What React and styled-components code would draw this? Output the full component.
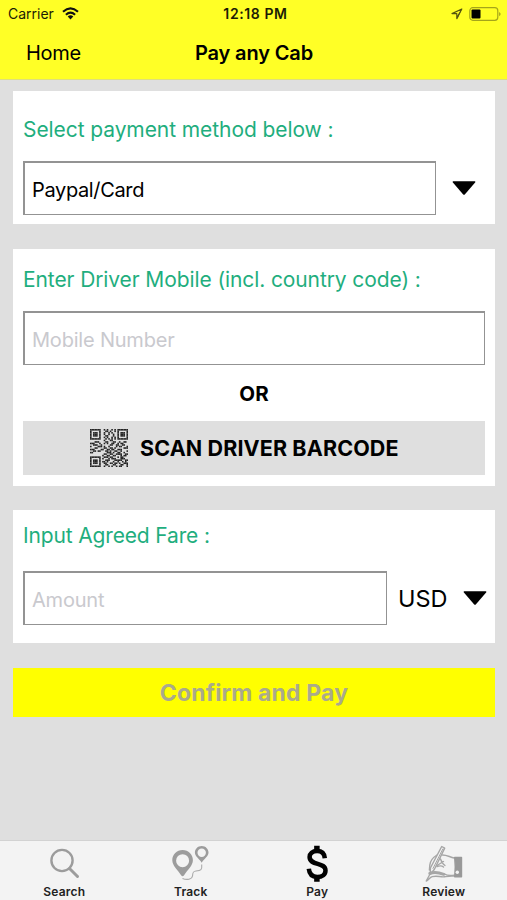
import React from 'react';
import styled, { createGlobalStyle } from 'styled-components';

const GlobalStyle = createGlobalStyle`
  * { box-sizing: border-box; }
  body {
    margin: 0;
    background: #dfdfdf;
    font-family: Inter, 'Liberation Sans', sans-serif;
    color: #000;
  }
  button, input { font: inherit; color: inherit; }
`;

const Screen = styled.div`
  width: 507px;
  height: 900px;
  display: flex;
  flex-direction: column;
  background: #dfdfdf;
  overflow: hidden;
`;

const Header = styled.header`
  height: 80px;
  background: #ffff26;
  border-bottom: 1px solid #dede7c;
`;

const StatusBar = styled.div`
  height: 27px;
  padding: 0 6px 0 8px;
  display: grid;
  grid-template-columns: 1fr auto 1fr;
  align-items: center;
  font-size: 14px;
  line-height: 27px;
  color: #1c1c05;
`;

const Carrier = styled.div`
  display: flex;
  align-items: center;
  gap: 8px;
`;

const Clock = styled.div`
  padding-left: 2px;
  font-weight: 600;
  letter-spacing: 0.6px;
`;

const StatusRight = styled.div`
  display: flex;
  justify-content: flex-end;
  align-items: center;
  gap: 6px;
`;

const NavBar = styled.div`
  height: 51px;
  padding: 0 25px 0 26px;
  display: grid;
  grid-template-columns: 1fr auto 1fr;
  align-items: center;
  font-size: 20px;
`;

const BackButton = styled.button`
  justify-self: start;
  padding: 0;
  border: 0;
  background: none;
  letter-spacing: -0.3px;
`;

const Title = styled.h1`
  margin: 0;
  font-size: 20px;
  font-weight: 600;
  letter-spacing: -0.15px;
`;

const Content = styled.main`
  flex: 1;
  padding: 11px 12px 0 13px;
`;

const Card = styled.section`
  height: ${({ $height }) => $height}px;
  margin-bottom: ${({ $gap }) => $gap}px;
  padding: ${({ $top }) => $top}px 10px 0;
  background: #fff;
`;

const Label = styled.h2`
  margin: 0 0 ${({ $gap }) => $gap}px;
  font-size: 21px;
  line-height: 28px;
  font-weight: 400;
  letter-spacing: ${({ $spacing }) => $spacing}px;
  white-space: nowrap;
  color: #1fae7e;
`;

const Row = styled.div`
  display: flex;
  align-items: center;
`;

const Field = styled.input`
  display: block;
  flex: none;
  width: ${({ $width }) => $width}px;
  height: 54px;
  padding: 3px 7px 0;
  border: solid #939393;
  border-width: 2px 1px 1px 2px;
  border-radius: 0;
  background: #fff;
  outline: 0;
  font-size: 20px;
  letter-spacing: ${({ $spacing }) => $spacing}px;
  &::placeholder { color: #c9c9ce; opacity: 1; }
`;

const Or = styled.div`
  height: 56px;
  line-height: 57px;
  text-align: center;
  font-size: 20.5px;
  font-weight: 700;
`;

const ScanButton = styled.button`
  width: 100%;
  height: 54px;
  padding: 0 0 0 67px;
  display: flex;
  align-items: center;
  gap: 12px;
  border: 0;
  background: #dfdfdf;
  font-size: 21.5px;
  font-weight: 700;
  letter-spacing: 0.12px;
  white-space: nowrap;
`;

const Currency = styled.span`
  flex: none;
  width: 64px;
  margin-left: 11px;
  font-size: 23.5px;
`;

const ConfirmButton = styled.button`
  display: block;
  width: 100%;
  height: 49px;
  padding: 0;
  border: 0;
  background: #ff0;
  color: #aaaa8c;
  font-size: 23px;
  font-weight: 700;
  letter-spacing: 0.15px;
`;

const TabBar = styled.nav`
  height: 60px;
  padding-left: 1px;
  display: grid;
  grid-template-columns: repeat(4, 1fr);
  background: #f3f3f3;
  border-top: 1px solid #d2d2d2;
`;

const Tab = styled.a`
  display: flex;
  flex-direction: column;
  align-items: center;
  padding-top: 4px;
  color: #222;
  font-size: 12px;
  font-weight: 600;
  letter-spacing: 0.2px;
  line-height: 15px;
  svg { display: block; margin-bottom: 1px; }
`;

const Caret = styled.svg`
  flex: none;
  margin-left: ${({ $left }) => $left}px;
`;

const WifiIcon = () => (
  <svg width="17" height="13" viewBox="0 0 17 13">
    <g fill="none" stroke="#111" strokeWidth="2.1">
      <path d="M1 4.8Q8.5-2 16 4.8" />
      <path d="M3.9 7.7Q8.5 3.6 13.1 7.7" />
    </g>
    <path d="M5.7 9.5Q8.5 7.1 11.3 9.5L8.5 12.5z" fill="#111" />
  </svg>
);

const LocationIcon = () => (
  <svg width="12" height="12" viewBox="0 0 12 12">
    <path d="M10.8 1L1 5.600h4.800v5z" fill="none" stroke="#55550f" strokeWidth="1.2" strokeLinejoin="round" />
    <path d="M10.8 1L6.4 7.5v3.2z" fill="#55550f" />
  </svg>
);

const BatteryIcon = () => (
  <svg width="32" height="14" viewBox="0 0 32 14">
    <rect x=".8" y=".7" width="28" height="12.6" rx="3" fill="none" stroke="#a5a51a" strokeWidth="1.2" />
    <rect x="2.5" y="2.4" width="9" height="9.2" rx="1" />
    <path d="M30.3 5v4.2q1.2-.8 1.2-2.1T30.3 5z" fill="#8c8c15" />
  </svg>
);

const DownArrow = ({ left }) => (
  <Caret width="24" height="14" viewBox="0 0 24 14" $left={left}>
    <path d="M1.2.2h21.6q1 .5.3 1.4L13 13.2q-1 1-2 0L.9 1.6Q.2.7 1.2.2z" />
  </Caret>
);

const QR_ROWS = [
  '1111111001010010101111111',
  '1000001000110100101000001',
  '1011101001001010001011101',
  '1011101001001001001011101',
  '1011101000110001001011101',
  '1000001001010010101000001',
  '1111111000101010101111111',
  '0000000001000110000000000',
  '0001110000110001100100110',
  '1110001001010011001011000',
  '0011100100000110011001100',
  '1000011101001000010110001',
  '0001100001100110100000111',
  '1110000110011011001110000',
  '0011011000110100110010001',
  '1100000000011101001100100',
  '0000000001100110011110011',
  '0000000010011001100010110',
  '1111111001110110001011000',
  '1000001010001011100011100',
  '1011101000111000111110011',
  '1011101011010001001001010',
  '1011101001100110110100111',
  '1000001000110001100011001',
  '1111111001001010010110001',
];

const QrIcon = () => (
  <svg width="38" height="38" viewBox="0 0 25 25">
    {QR_ROWS.map((row, y) => row.split('').map((cell, x) => (
      cell === '1' ? <rect key={`${x}-${y}`} x={x} y={y} width="1.05" height="1.05" fill="#242424" /> : null
    )))}
  </svg>
);

const SearchIcon = () => (
  <svg width="38" height="38" viewBox="0 0 38 38" fill="none" stroke="#9c9c9c">
    <circle cx="17" cy="15.5" r="10.6" strokeWidth="2.4" />
    <path d="M24.5 23.5l8 8" strokeWidth="3" strokeLinecap="round" />
  </svg>
);

const TrackIcon = () => (
  <svg width="38" height="38" viewBox="0 0 38 38">
    <path
      fill="#9c9c9c"
      fillRule="evenodd"
      d="M10.6 5C4.7 5 .3 9.5.3 15.2c0 5.500 5.300 9.300 8.800 15.100q1.500 2 3 0c3.500-5.800 8.800-9.600 8.800-15.100C20.900 9.500 16.500 5 10.600 5zm0 4.200a6.500 6.500 0 1 1 0 13 6.500 6.500 0 0 1 0-13z"
    />
    <path
      fill="#9c9c9c"
      fillRule="evenodd"
      d="M29.700 1c-3.900 0-6.800 2.900-6.800 6.600 0 3.800 3.800 5.500 6.800 10.200 3-4.700 6.800-6.400 6.800-10.200C36.500 3.900 33.600 1 29.700 1zm0 2.600a4.200 4.200 0 1 1 0 8.400 4.200 4.200 0 0 1 0-8.400z"
    />
    <path d="M10.500 33.500c4.500 1.800 9.500.8 10-2.500.4-2.800 0-4.600 3.500-5 5-.6 6.200-1 5.700-6.500" fill="none" stroke="#aaa" strokeWidth="1.100" />
  </svg>
);

const DollarIcon = () => (
  <svg width="38" height="38" viewBox="0 0 38 38" fill="none" stroke="#000">
    <path d="M18.900.8v5.500M18.900 31.500v5.300" strokeWidth="5.500" />
    <path d="M26.800 13.200c-.4-4.900-3.300-7.100-7.700-7.100-4.700 0-7.500 2.400-7.500 6 0 9 15.900 4.700 15.900 13.300 0 4.100-3.200 6.500-8.200 6.500-5.300 0-8-2.700-8.500-8.100" strokeWidth="4.500" />
  </svg>
);

const ReviewIcon = () => (
  <svg width="38" height="38" viewBox="0 0 38 38" fill="none" stroke="#a6a6a6" strokeWidth="1.400" strokeLinejoin="round" strokeLinecap="round">
    <path d="M12 10c-4 2.500-6.800 6-7.200 10l-.4 5" />
    <path d="M16.700 1.500l3 1.600L9.300 24.500l-4 4.500L5.400 23z" fill="#f3f3f3" />
    <path d="M17.800 4L8 23.500" strokeWidth="1" />
    <path d="M17.500 10c4.500 0 7 2 11.700 3M15.500 14c1.300 3.500 2.500 5.300 4.500 6.500M12 20.500l6.500-4M12 21.500c3-1 5-.8 6.500.5" />
    <path d="M19.500 29c3 2.200 6 1.800 9.700 1.300M4.500 30L1.200 36c2.300-1 3.500-3.500 6-4.300 5-1.400 8 .6 12 .1 2.300-.3 5.500-1 9.500-.7" />
    <path d="M4.800 28.500c4-1.600 9-1 14 .8" strokeWidth="3" />
    <path d="M29.700 12.500h6.800v19.300h-6.800c.8-6 .8-12.500 0-19.300z" fill="#999" stroke="#999" />
    <circle cx="32.300" cy="27.300" r="1.700" fill="#f3f3f3" stroke="none" />
  </svg>
);

const tabs = [
  { name: 'Search', Icon: SearchIcon },
  { name: 'Track', Icon: TrackIcon },
  { name: 'Pay', Icon: DollarIcon },
  { name: 'Review', Icon: ReviewIcon },
];

function App() {
  return (
    <>
      <GlobalStyle />
      <Screen>
        <Header>
          <StatusBar>
            <Carrier>
              Carrier
              <WifiIcon />
            </Carrier>
            <Clock>12:18 PM</Clock>
            <StatusRight>
              <LocationIcon />
              <BatteryIcon />
            </StatusRight>
          </StatusBar>
          <NavBar>
            <BackButton type="button">Home</BackButton>
            <Title>Pay any Cab</Title>
          </NavBar>
        </Header>

        <Content>
          <Card $height={133} $gap={25} $top={25}>
            <Label $gap={17} $spacing={-0.08}>Select payment method below :</Label>
            <Row>
              <Field $width={413} $spacing={-0.35} defaultValue="Paypal/Card" />
              <DownArrow left={16} />
            </Row>
          </Card>

          <Card $height={237} $gap={24} $top={17}>
            <Label $gap={17} $spacing={-0.1}>Enter Driver Mobile (incl. country code) :</Label>
            <Field $width={462} $spacing={-0.2} placeholder="Mobile Number" />
            <Or>OR</Or>
            <ScanButton type="button">
              <QrIcon />
              SCAN DRIVER BARCODE
            </ScanButton>
          </Card>

          <Card $height={133} $gap={25} $top={12}>
            <Label $gap={21} $spacing={-0.15}>Input Agreed Fare :</Label>
            <Row>
              <Field $width={364} $spacing={-0.2} placeholder="Amount" />
              <Currency>USD</Currency>
              <DownArrow left={1} />
            </Row>
          </Card>

          <ConfirmButton type="button">Confirm and Pay</ConfirmButton>
        </Content>

        <TabBar>
          {tabs.map(({ name, Icon }) => (
            <Tab key={name}>
              <Icon />
              {name}
            </Tab>
          ))}
        </TabBar>
      </Screen>
    </>
  );
}

export default App;
